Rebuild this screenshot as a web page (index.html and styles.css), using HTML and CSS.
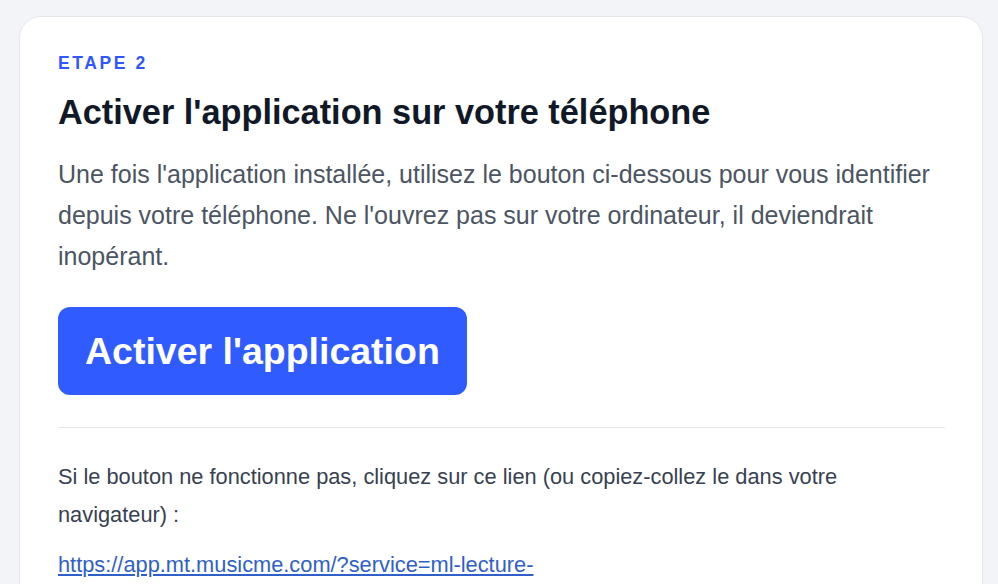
FILE: index.html
```html
<!DOCTYPE html>
<html lang="fr">
<head>
<meta charset="utf-8">
<link rel="stylesheet" href="styles.css">
</head>
<body>
<div class="card">
  <div class="step">ETAPE 2</div>
  <h1 class="title">Activer l'application sur votre téléphone</h1>
  <p class="lead">Une fois l'application installée, utilisez le bouton ci-dessous pour vous identifier depuis votre téléphone. Ne l'ouvrez pas sur votre ordinateur, il deviendrait inopérant.</p>
  <div class="actions"><a class="btn" href="#">Activer l'application</a></div>
  <hr class="sep">
  <p class="note">Si le bouton ne fonctionne pas, cliquez sur ce lien (ou copiez-collez le dans votre navigateur) :</p>
  <p class="linkline"><a class="link" href="#">https://app.mt.musicme.com/?service=ml-lecture-</a></p>
</div>
</body>
</html>
```
FILE: styles.css
```css
html, body { margin: 0; padding: 0; }
body {
  background: #f3f4f8;
  font-family: "Liberation Sans", Arial, sans-serif;
  padding: 16px 15px 0 19px;
  overflow: hidden;
  height: 584px;
  box-sizing: border-box;
}
.card {
  background: #fff;
  border: 1px solid #e4e6ec;
  border-radius: 22px;
  padding: 34px 37px 40px 38px;
  height: 700px;
}
.step {
  color: #3057ff;
  font-weight: 700;
  font-size: 17.5px;
  letter-spacing: 2.6px;
  line-height: 24px;
}
.title {
  margin: 17px 0 0;
  font-size: 34.3px;
  line-height: 40px;
  color: #111827;
  font-weight: 700;
}
.lead {
  margin: 22px 0 0;
  font-size: 25px;
  line-height: 41px;
  color: #4b5563;
}
.actions { margin-top: 30px; display: flex; }
.btn {
  display: inline-block;
  background: #2f5bff;
  color: #fff;
  text-decoration: none;
  font-weight: 700;
  font-size: 37.5px;
  line-height: 88px;
  padding: 0 27px;
  border-radius: 12px;
}
.sep {
  border: 0;
  border-top: 1px solid #e5e7eb;
  margin: 32px 0 0;
}
.note {
  margin: 30px 0 0;
  font-size: 21.8px;
  line-height: 38px;
  color: #374151;
}
.linkline { margin: 17px 0 0; font-size: 21.8px; line-height: 28px; }
.link { color: #2f5fc8; text-decoration: underline; }
```
